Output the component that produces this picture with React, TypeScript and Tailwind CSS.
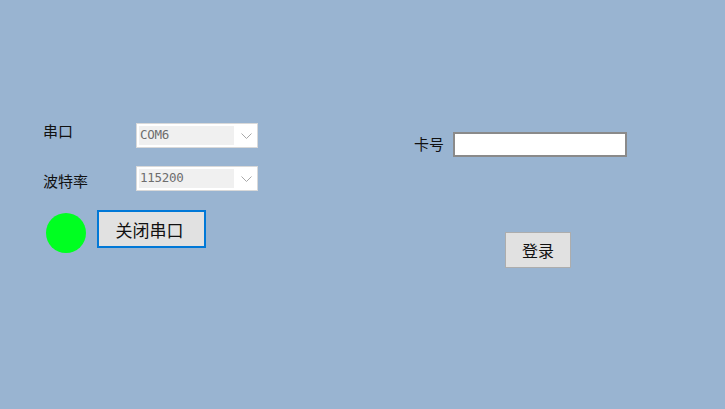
const cjk = 'font-["Microsoft_YaHei","Noto_Sans_CJK_SC",sans-serif]';

function Combo({ value }: { value: string }) {
  return (
    <div className="w-[122px] h-[25px] border border-[#d9d9d9] bg-white p-[2px] flex">
      <div className="w-[95px] bg-[#f0f0f0] flex items-center pl-[1px] text-[12.5px] text-[#6d6d6d] font-['DejaVu_Sans_Mono',monospace] tracking-[-0.3px]">
        {value}
      </div>
      <div className="flex-1 flex items-center justify-center pl-[3px]">
        <svg width="11" height="6" viewBox="0 0 11 6" fill="none" stroke="#a8a8a8" strokeWidth="1">
          <polyline points="0.5,0.5 5.5,5.5 10.5,0.5" />
        </svg>
      </div>
    </div>
  );
}

export default function App() {
  return (
    <div className={`w-[725px] h-[409px] bg-[#99b4d1] flex text-[#111] ${cjk}`}>
      {/* left: serial port */}
      <div className="w-[414px] pl-[43px] pt-[123px] flex flex-col">
        <div className="flex items-start">
          <span className="w-[93px] text-[15px] leading-[16px]">串口</span>
          <Combo value="COM6" />
        </div>
        <div className="flex items-center mt-[18px]">
          <span className="w-[93px] text-[15px] leading-[16px] pt-[4px]">波特率</span>
          <Combo value="115200" />
        </div>
        <div className="flex items-start mt-[19px]">
          <div className="w-[40px] h-[40px] rounded-full bg-[#00ff21] ml-[3px] mt-[3px]"></div>
          <button className="ml-[11px] w-[109px] h-[38px] border-2 border-[#0078d7] bg-[#e1e1e1] text-[17px] leading-none flex items-center justify-center pr-[4px]">
            关闭串口
          </button>
        </div>
      </div>

      {/* right: card login */}
      <div className="pt-[132px] flex flex-col">
        <div className="flex items-center">
          <span className="w-[39px] text-[15px] leading-[16px] pb-[1px]">卡号</span>
          <input className="w-[174px] h-[25px] border-2 border-[#8a8a8a] bg-white outline-none" />
        </div>
        <button className="ml-[91px] mt-[75px] w-[66px] h-[36px] border border-[#adadad] bg-[#e1e1e1] text-[16px] leading-none flex items-center justify-center">
          登录
        </button>
      </div>
    </div>
  );
}
